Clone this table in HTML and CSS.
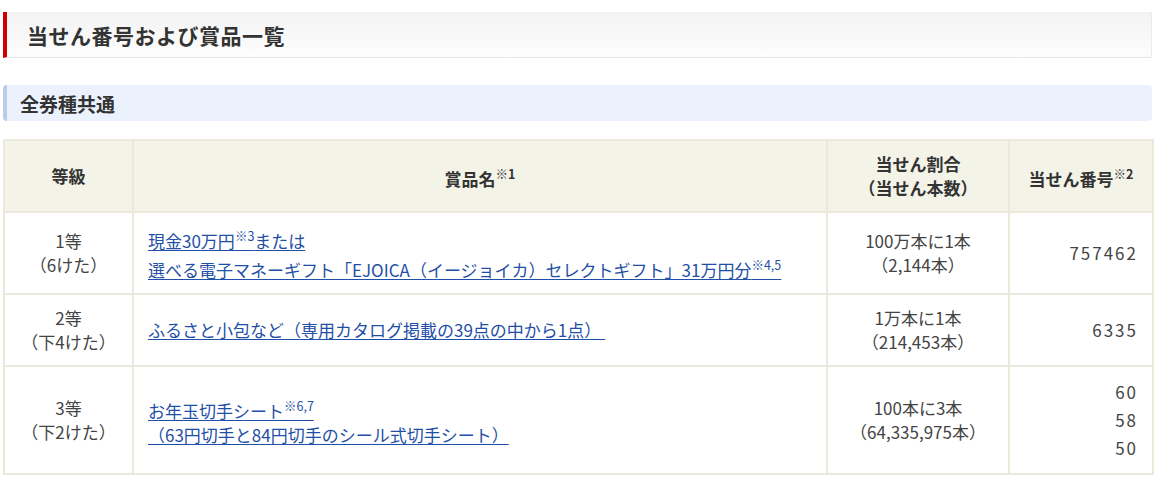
FILE: index.html
```html
<!DOCTYPE html>
<html lang="ja">
<head>
<meta charset="utf-8">
<title>当せん番号および賞品一覧</title>
<link rel="stylesheet" href="styles.css">
</head>
<body>
<div class="page">
  <h2 class="title">当せん番号および賞品一覧</h2>
  <h3 class="subtitle">全券種共通</h3>
  <table class="prize-table">
    <colgroup>
      <col class="c-rank">
      <col class="c-name">
      <col class="c-rate">
      <col class="c-num">
    </colgroup>
    <thead>
      <tr>
        <th>等級</th>
        <th>賞品名<sup>※1</sup></th>
        <th>当せん割合<br>（当せん本数）</th>
        <th>当せん番号<sup>※2</sup></th>
      </tr>
    </thead>
    <tbody>
      <tr>
        <td class="rank">1等<br>（6けた）</td>
        <td class="name"><a href="#">現金30万円<sup>※3</sup></a><a href="#">または</a><br><a href="#">選べる電子マネーギフト「EJOICA（イージョイカ）セレクトギフト」31万円分<sup>※4,5</sup></a></td>
        <td class="rate">100万本に1本<br>（2,144本）</td>
        <td class="num">757462</td>
      </tr>
      <tr>
        <td class="rank">2等<br>（下4けた）</td>
        <td class="name"><a href="#">ふるさと小包など（専用カタログ掲載の39点の中から1点）&nbsp;</a></td>
        <td class="rate">1万本に1本<br>（214,453本）</td>
        <td class="num">6335</td>
      </tr>
      <tr>
        <td class="rank">3等<br>（下2けた）</td>
        <td class="name"><a href="#">お年玉切手シート<sup>※6,7</sup><br>（63円切手と84円切手のシール式切手シート）</a></td>
        <td class="rate">100本に3本<br>（64,335,975本）</td>
        <td class="num multi"><span>60</span><span>58</span><span>50</span></td>
      </tr>
    </tbody>
  </table>
</div>
</body>
</html>
```

FILE: styles.css
```css
html, body {
  margin: 0;
  padding: 0;
  background: #ffffff;
}

body {
  font-family: "Noto Sans CJK JP", "Noto Sans", sans-serif;
  color: #333333;
  font-size: 16px;
}

.page {
  width: 1149px;
  padding: 12px 0 0 3px;
}

.title {
  margin: 0;
  height: 46px;
  box-sizing: border-box;
  display: flex;
  align-items: center;
  padding-left: 20px;
  border-left: 4px solid #d00000;
  border-bottom: 1px solid #e8e8e8;
  border-right: 1px solid #ececec;
  background: linear-gradient(#f3f3f3, #fdfdfd);
  font-size: 21px;
  font-weight: bold;
  color: #333333;
  letter-spacing: 0.5px;
}

.subtitle {
  margin: 27px 0 0 0;
  height: 36px;
  box-sizing: border-box;
  display: flex;
  align-items: center;
  padding-left: 13px;
  border-left: 4px solid #b9cdea;
  border-radius: 4px;
  background: #ebf2fe;
  font-size: 19px;
  font-weight: bold;
  color: #333333;
}

.prize-table {
  margin-top: 18px;
  width: 1149px;
  border-collapse: collapse;
  table-layout: fixed;
  border: 2px solid #eae9dc;
  font-size: 17px;
}

.c-rank { width: 129px; }
.c-name { width: 694px; }
.c-rate { width: 182px; }
.c-num { width: 144px; }

.prize-table th,
.prize-table td {
  border: 2px solid #eae9dc;
  line-height: 24px;
  padding: 11px 14px;
  vertical-align: middle;
}

.prize-table th {
  background: #f4f3e8;
  font-weight: bold;
  text-align: center;
  color: #333333;
}

.prize-table sup {
  font-size: 12.5px;
  line-height: 24px;
  vertical-align: 7px;
}

.rank,
.rate {
  text-align: center;
  color: #444444;
}

.name a {
  color: #1f4fa6;
  text-decoration: underline;
  text-underline-offset: 2px;
}

.num {
  text-align: right;
  color: #444444;
  letter-spacing: 2px;
  padding-right: 11px;
}

.num.multi span {
  display: block;
  line-height: 28px;
}
```
